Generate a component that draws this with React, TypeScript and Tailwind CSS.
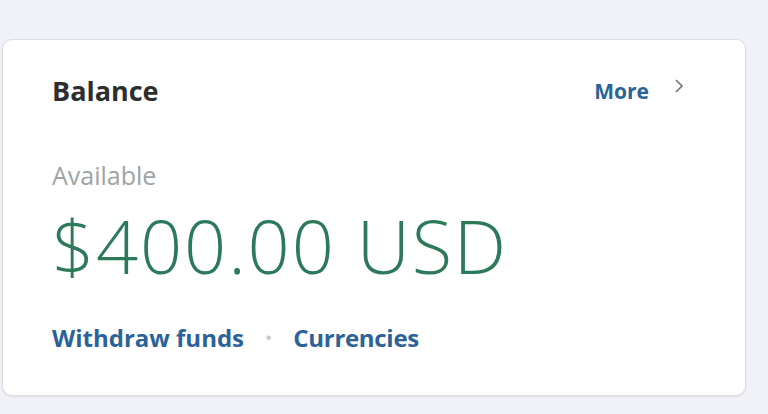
import React from 'react'

const font = { fontFamily: '"Open Sans", "Noto Sans", sans-serif' }

export default function App() {
  return (
    <div className="w-[768px] h-[414px] bg-[#f1f2f7] pt-[39px] pl-[2px] overflow-hidden" style={font}>
      <div className="w-[744px] h-[357px] bg-white rounded-[10px] border border-[#dcdde2] shadow-[0_1px_2px_rgba(0,0,0,0.08)] pl-[49px] pr-[60px] pt-[33px]">
        <div className="flex items-center justify-between">
          <h2 className="text-[27px] font-bold text-[#2c2e2f] leading-[36px]">Balance</h2>
          <div className="flex items-center gap-[24px]">
            <span className="text-[21px] font-bold text-[#2a6496] leading-[36px]">More</span>
            <svg width="12" height="16" viewBox="0 0 12 16" className="-mt-[10px]">
              <path d="M3 2 L9 8 L3 14" fill="none" stroke="#6c7378" strokeWidth="1.6" />
            </svg>
          </div>
        </div>
        <div className="mt-[50px] text-[25px] text-[#9da3a6] leading-[32px]">Available</div>
        <div className="mt-[15px] text-[74px] font-light text-[#2d7a5b] leading-[80px] tracking-[1.8px]">$400.00 USD</div>
        <div className="mt-[36px] flex items-center text-[24px] font-bold text-[#2b6299] leading-[32px]">
          <span>Withdraw funds</span>
          <span className="mx-[22px] text-[#c6c9cc] text-[14px]">•</span>
          <span className="tracking-[-0.3px]">Currencies</span>
        </div>
      </div>
    </div>
  )
}
